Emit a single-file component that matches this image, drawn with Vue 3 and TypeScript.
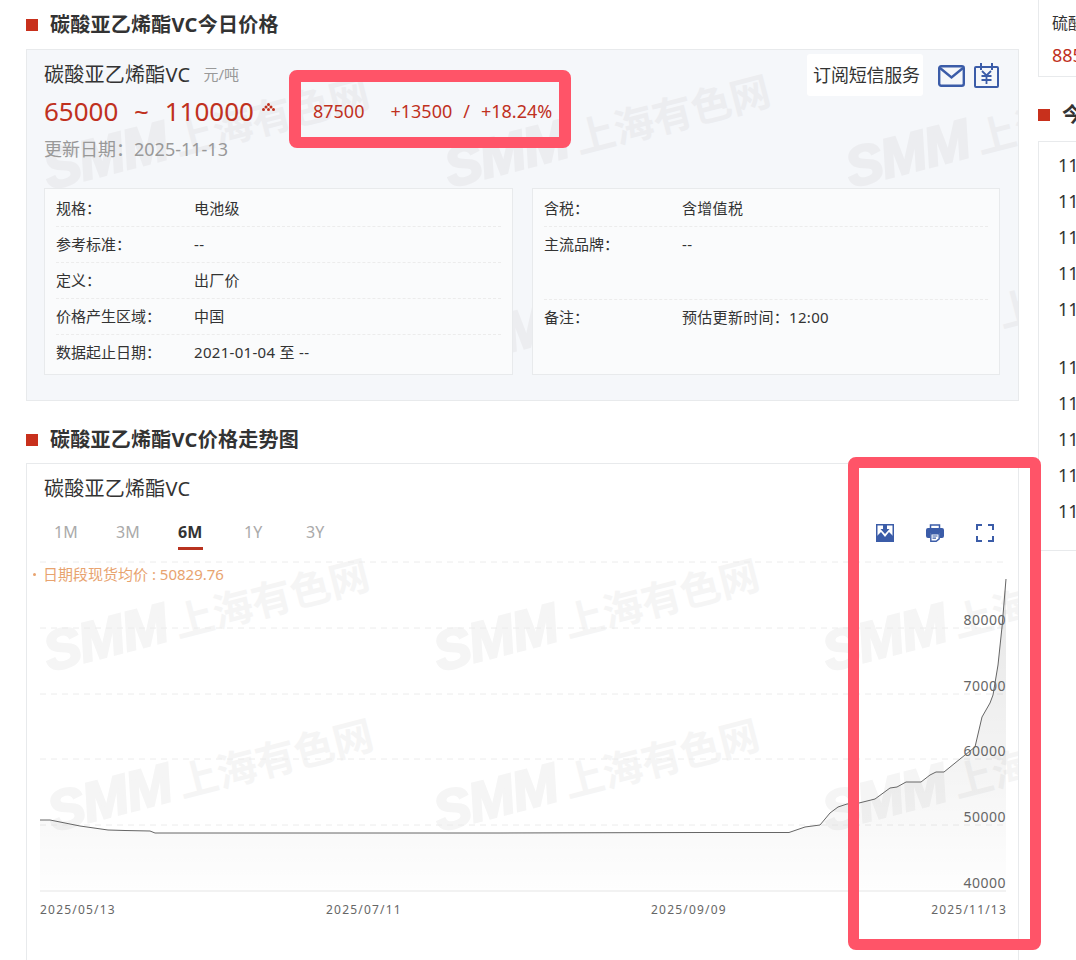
<script setup lang="ts">
interface Row { label: string; value: string; tall?: boolean }
interface Mark { x: number; y: number }

const leftRows: Row[] = [
  { label: '规格\uFF1A', value: '电池级' },
  { label: '参考标准\uFF1A', value: '--' },
  { label: '定义\uFF1A', value: '出厂价' },
  { label: '价格产生区域\uFF1A', value: '中国' },
  { label: '数据起止日期\uFF1A', value: '2021-01-04 至 --' },
]
const rightRows: Row[] = [
  { label: '含税\uFF1A', value: '含增值税' },
  { label: '主流品牌\uFF1A', value: '--', tall: true },
  { label: '备注\uFF1A', value: '预估更新时间\uFF1A12:00' },
]
const tabs = ['1M', '3M', '6M', '1Y', '3Y']
const sideRows = [0, 1, 2, 3, 4, 5, 6, 7, 8, 9]

const topMarks: Mark[] = [
  { x: 26, y: 90 }, { x: 427, y: 88 }, { x: 828, y: 88 },
  { x: 450, y: 262 }, { x: 850, y: 262 },
]
const chartMarks: Mark[] = [
  { x: 26, y: 158 }, { x: 416, y: 158 }, { x: 805, y: 158 },
  { x: 30, y: 318 }, { x: 416, y: 318 }, { x: 805, y: 318 },
]

const pts: [number, number][] = [
  [40, 820], [50, 820], [80, 826], [108, 830], [125, 830.5], [150, 831], [155, 833],
  [500, 833], [700, 832.5], [789, 832.5], [805, 827], [820, 825], [830, 813], [838, 807],
  [847, 804], [859, 803], [875, 799], [890, 788], [897, 787], [906, 782], [921, 782],
  [930, 775], [936, 772], [944, 772], [960, 759], [975, 747], [982, 717], [990, 703],
  [993, 695], [998, 665], [1002, 627], [1006, 579],
]
const line = pts.map((p) => p.join(',')).join(' ')
const area = `40,891 ${line} 1006,891`
const grid = [562, 628, 694, 759, 825]
const yLabels = [
  { t: '80000', y: 625 }, { t: '70000', y: 691 }, { t: '60000', y: 756 },
  { t: '50000', y: 822 }, { t: '40000', y: 888 },
]
const xLabels = [
  { t: '2025/05/13', x: 40, a: 'start' }, { t: '2025/07/11', x: 326, a: 'start' },
  { t: '2025/09/09', x: 651, a: 'start' }, { t: '2025/11/13', x: 1007, a: 'end' },
]
</script>

<template>
  <div class="page">
    <main class="main">
      <h2 class="heading first"><i class="square"></i>碳酸亚乙烯酯VC今日价格</h2>
      <section class="panel">
        <div v-for="(m, i) in topMarks" :key="i" class="mark" :style="{ left: m.x + 'px', top: m.y + 'px' }"><b>SMM</b><span>上海有色网</span></div>
        <div class="panel-body">
          <div class="title-row">
            <span class="name">碳酸亚乙烯酯VC</span><span class="unit">元/吨</span>
            <div class="tools">
              <span class="sub">订阅短信服务</span>
              <svg class="mail" width="27" height="22" viewBox="0 0 27 22" fill="none" stroke="#3b5ca8" stroke-width="2.4"><rect x="1.2" y="1.2" width="24.6" height="19.6" rx="2" /><path d="M2 3l11.5 9.5L25 3" /></svg>
              <svg class="cal" width="25" height="25" viewBox="0 0 25 25" fill="none" stroke="#3b5ca8" stroke-width="2"><rect x="1" y="4" width="23" height="20" rx="1" /><path d="M7 0v7M18 0v7" /><path d="M8 8l4.500 4.500L17 8M7.500 13h10M7.500 17h10M12.500 13v8" stroke-width="1.800" /></svg>
            </div>
          </div>
          <div class="price-row">
            <span class="range">65000 ~ 110000</span>
            <svg class="dots" width="13" height="8" viewBox="0 0 13 8" fill="#c0311e"><circle cx="6.500" cy="1.500" r="1.500" /><circle cx="4" cy="4" r="1.500" /><circle cx="9" cy="4" r="1.500" /><circle cx="1.500" cy="6.500" r="1.500" /><circle cx="6.500" cy="6.500" r="1.500" /><circle cx="11.500" cy="6.500" r="1.500" /></svg>
            <span class="avg">87500</span>
            <span class="chg">+13500</span>
            <span class="slash">/</span>
            <span class="pct">+18.24%</span>
          </div>
          <div class="date">更新日期&#xFF1A;2025-11-13</div>
          <div class="tables">
            <div class="table">
              <div v-for="r in leftRows" :key="r.label" class="row"><span class="label">{{ r.label }}</span><span class="value">{{ r.value }}</span></div>
            </div>
            <div class="table">
              <div v-for="r in rightRows" :key="r.label" class="row" :class="{ tall: r.tall }"><span class="label">{{ r.label }}</span><span class="value">{{ r.value }}</span></div>
            </div>
          </div>
        </div>
      </section>

      <h2 class="heading second"><i class="square"></i>碳酸亚乙烯酯VC价格走势图</h2>
      <section class="panel chart-panel">
        <div v-for="(m, i) in chartMarks" :key="i" class="mark" :style="{ left: m.x + 'px', top: m.y + 'px' }"><b>SMM</b><span>上海有色网</span></div>
        <div class="panel-body chart-body">
          <div class="name chart-name">碳酸亚乙烯酯VC</div>
          <div class="tab-row">
            <div class="tabs">
              <span v-for="t in tabs" :key="t" class="tab" :class="{ on: t === '6M' }">{{ t }}</span>
            </div>
            <div class="chart-tools">
              <svg width="18" height="18" viewBox="0 0 18 18"><rect width="18" height="18" fill="#3b5ca8" /><rect x="1.500" y="1.500" width="15" height="15" fill="#fff" /><path d="M1 17v-5l4-4 4 5 4-5 4 4v5z" fill="#3b5ca8" /><path d="M7 1h4v4h2.500L9 10 4.500 5H7z" fill="#3b5ca8" /></svg>
              <svg width="18" height="18" viewBox="0 0 18 18"><path d="M4.500 4V1h9v3" fill="none" stroke="#3b5ca8" stroke-width="1.500" /><path d="M2 4h14a2 2 0 0 1 2 2v6a2 2 0 0 1-2 2h-2V9H4v5H2a2 2 0 0 1-2-2V6a2 2 0 0 1 2-2z" fill="#3b5ca8" /><path d="M4.800 9.800h8.400v5l-3 2.500H4.800z" fill="#fff" stroke="#3b5ca8" stroke-width="1.400" /><path d="M6.500 12h5M6.500 14.200h3.500" stroke="#3b5ca8" stroke-width="1.200" /></svg>
              <svg width="18" height="18" viewBox="0 0 18 18" fill="none" stroke="#3b5ca8" stroke-width="2"><path d="M1 6V1h5M12 1h5v5M17 12v5h-5M6 17H1v-5" /></svg>
            </div>
          </div>
          <svg class="chart" width="991" height="409" viewBox="27 551 991 409">
            <defs>
              <linearGradient id="fill" gradientUnits="userSpaceOnUse" x1="0" y1="579" x2="0" y2="891">
                <stop offset="0" stop-color="#000" stop-opacity=".1" />
                <stop offset="1" stop-color="#000" stop-opacity=".005" />
              </linearGradient>
            </defs>
            <line v-for="g in grid" :key="g" x1="40" x2="1006" :y1="g" :y2="g" stroke="#ececec" stroke-dasharray="6 5" />
            <polygon :points="area" fill="url(#fill)" />
            <line x1="40" x2="1006" y1="891" y2="891" stroke="#e6e6e6" />
            <polyline :points="line" fill="none" stroke="#666" stroke-width="1" />
            <circle cx="34.500" cy="574.500" r="1.500" fill="#e8a36f" />
            <text class="legend" x="43" y="580">日期段现货均价 : 50829.76</text>
            <text v-for="l in yLabels" :key="l.t" class="axis-y" x="1006" :y="l.y" text-anchor="end">{{ l.t }}</text>
            <text v-for="l in xLabels" :key="l.t" class="axis-x" :x="l.x" y="914" :text-anchor="l.a">{{ l.t }}</text>
          </svg>
        </div>
      </section>
    </main>

    <aside class="side">
      <div class="side-card">
        <div class="side-name">硫酸</div>
        <div class="side-price">885</div>
      </div>
      <h2 class="heading side-heading"><i class="square"></i>今日</h2>
      <div class="side-list">
        <div v-for="n in sideRows" :key="n" class="side-row" :class="{ gap: n === 5 }">11</div>
      </div>
    </aside>

    <div class="flag flag-price"></div>
    <div class="flag flag-axis"></div>
  </div>
</template>

<style>
html, body { margin: 0; overflow: hidden; background: #fff; }
</style>

<style scoped>
.page {
  position: relative;
  display: flex;
  width: 1076px;
  height: 960px;
  overflow: hidden;
  padding-left: 26px;
  box-sizing: border-box;
  font-family: "Noto Sans", "Noto Sans CJK SC", sans-serif;
  color: #333;
}
.main { flex: none; width: 993px; margin-right: 19px; display: flex; flex-direction: column; }
.heading { display: flex; align-items: center; margin: 0; font-size: 20px; font-weight: 700; color: #333; line-height: 28px; letter-spacing: .25px; }
.first { height: 49px; }
.second { height: 62px; padding-top: 16px; box-sizing: border-box; }
.square { width: 12px; height: 12px; background: #c8301c; margin-right: 12px; flex: none; }
.panel { position: relative; overflow: hidden; background: #f5f7fa; border: 1px solid #e8eaec; height: 352px; box-sizing: border-box; }
.panel-body { position: relative; padding: 10px 17px 0; }
.mark { position: absolute; display: flex; align-items: baseline; gap: 8px; white-space: nowrap; color: #ecedf0; transform: rotate(-14.5deg); transform-origin: left bottom; }
.chart-panel .mark { color: #f5f5f5; }
.mark b { font-family: "Liberation Sans", sans-serif; font-style: italic; font-weight: 700; font-size: 55px; line-height: 60px; letter-spacing: -1px; -webkit-text-stroke: 2.500px currentColor; }
.mark span { font-size: 40px; font-weight: 700; line-height: 60px; }
.title-row { display: flex; align-items: center; height: 30px; position: relative; }
.name { font-size: 20px; line-height: 30px; color: #333; letter-spacing: .25px; }
.unit { font-size: 15px; color: #999; margin-left: 13px; margin-top: -4px; }
.tools { margin-left: auto; display: flex; align-items: center; margin-right: 2px; }
.sub { background: #fff; border-radius: 3px; font-size: 18px; letter-spacing: -.2px; line-height: 42px; height: 42px; width: 116px; box-sizing: border-box; padding-left: 3px; text-align: center; margin-right: 15px; }
.mail { margin-right: 9px; margin-top: 2px; }
.price-row { display: flex; align-items: center; height: 38px; margin-top: 2px; color: #c0311e; }
.range { font-size: 26px; line-height: 38px; white-space: pre; word-spacing: 9px; }
.dots { margin-left: 8px; margin-top: -8px; }
.avg { font-size: 18px; margin-left: 38px; }
.chg { font-size: 18px; margin-left: 26px; }
.slash { font-size: 18px; margin-left: 11px; }
.pct { font-size: 18px; margin-left: 11px; }
.date { font-size: 18px; line-height: 28px; margin-top: 5px; color: #999; }
.tables { display: grid; grid-template-columns: 469px 468px; column-gap: 19px; margin-top: 25px; }
.table { background: #fafbfc; border: 1px solid #e8eaec; padding: 2px 11px 3px; height: 187px; box-sizing: border-box; font-size: 15px; }
.row { display: flex; height: 36px; line-height: 35px; box-sizing: border-box; border-bottom: 1px dashed #ececec; }
.row:last-child { border-bottom: none; }
.row.tall { height: 73px; }
.label { width: 138px; flex: none; }
.value { letter-spacing: .3px; }
.chart-panel { flex: 1; background: #fff; border-bottom: none; height: auto; }
.chart-body { padding: 10px 0 0; }
.chart-name { padding-left: 17px; }
.tab-row { display: flex; justify-content: space-between; height: 35px; margin-top: 12px; }
.tabs { display: flex; padding-left: 27px; }
.tab { width: 62px; font-size: 16px; line-height: 32px; color: #aaa; box-sizing: border-box; }
.tab.on { color: #333; font-weight: 700; position: relative; margin-right: 4px; }
.tab.on::after { content: ""; position: absolute; left: 0; top: 31px; width: 25px; height: 3px; background: #b8321f; }
.chart-tools { display: flex; gap: 32px; padding: 8px 24px 0 0; }
.chart-tools svg { display: block; }
.chart { display: block; position: relative; }
.legend { font-size: 15px; fill: #e8a36f; }
.axis-y { font-size: 14px; fill: #666; letter-spacing: .5px; }
.axis-x { font-size: 12px; fill: #666; letter-spacing: 1.2px; }
.side { flex: none; width: 300px; display: flex; flex-direction: column; }
.side-card { height: 77px; box-sizing: border-box; border: 1px solid #e8eaec; border-top: none; padding-left: 13px; }
.side-name { font-size: 16px; line-height: 24px; margin-top: 11px; }
.side-price { font-size: 18px; line-height: 28px; margin-top: 6px; color: #c0311e; }
.side-heading { height: 64px; padding-top: 12px; box-sizing: border-box; }
.side-list { height: 410px; box-sizing: border-box; border: 1px solid #e8eaec; padding: 5px 0 0 19px; }
.side-row { font-size: 18px; line-height: 36px; color: #333; }
.side-row.gap { margin-top: 22px; }
.flag { position: absolute; box-sizing: border-box; border: 11px solid #ff5468; border-radius: 8px; }
.flag-price { left: 289px; top: 70px; width: 282px; height: 78px; border-width: 12px 12px 11px; }
.flag-axis { left: 848px; top: 457px; width: 193px; height: 493px; }
</style>
